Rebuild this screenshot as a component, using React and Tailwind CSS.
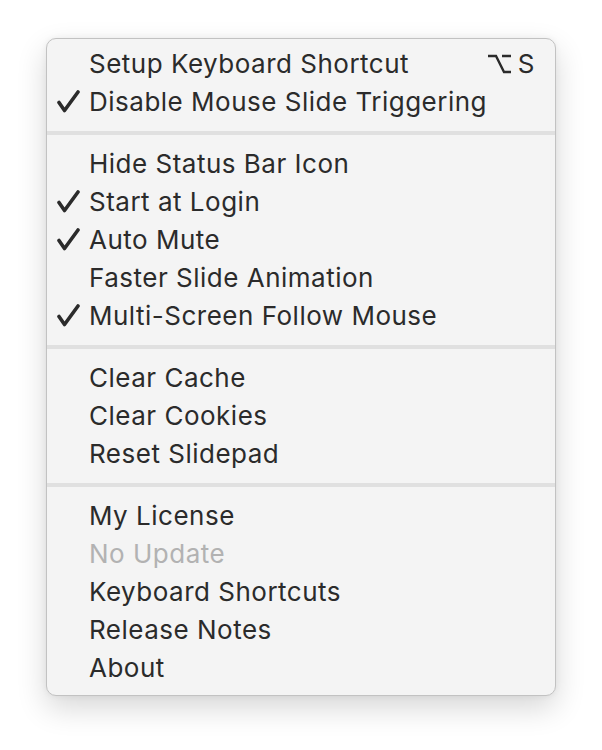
import React from "react";

const Check = () => (
  <svg width="24" height="24" viewBox="0 0 24 24" className="block">
    <path d="M3 12.5 L8.5 20.5 L22 2" fill="none" stroke="#2b2b2b" strokeWidth="3.6" strokeLinecap="round" strokeLinejoin="round" />
  </svg>
);

const OptionKey = () => (
  <svg width="25" height="20" viewBox="0 0 25 20" className="block">
    <path d="M1 2 H9 L17 18 H24" fill="none" stroke="#2b2b2b" strokeWidth="2.4" />
    <path d="M15 2 H24" fill="none" stroke="#2b2b2b" strokeWidth="2.4" />
  </svg>
);

const Row = ({ label, checked, disabled, shortcut }) => (
  <div className="flex h-[38px] items-center">
    <div className="flex w-[42px] shrink-0 items-center pl-[9px]">{checked ? <Check /> : null}</div>
    <div className={"flex-1 " + (disabled ? "text-[#b2b2b2]" : "text-[#2b2b2b]")}>{label}</div>
    {shortcut ? (
      <div className="flex items-center gap-[6px] pr-[20px] text-[#2b2b2b]">
        <OptionKey />
        <span>S</span>
      </div>
    ) : null}
  </div>
);

const Sep = () => (
  <div className="flex h-[24px] items-center">
    <div className="h-[4px] w-full bg-[#e0e0e0]" />
  </div>
);

export default function App() {
  return (
    <div className="min-h-[750px] w-[602px] bg-white pl-[46px] pt-[38px]" style={{ fontFamily: "Inter, 'Noto Sans', sans-serif" }}>
      <div className="w-[510px] overflow-hidden rounded-[10px] border border-[#c2c2c2] bg-[#f4f4f4] pb-[8px] pt-[6px] text-[26px] leading-none tracking-[0.5px] shadow-[0_12px_30px_rgba(0,0,0,0.16),0_0_6px_rgba(0,0,0,0.06)]">
        <Row label="Setup Keyboard Shortcut" shortcut />
        <Row label="Disable Mouse Slide Triggering" checked />
        <Sep />
        <Row label="Hide Status Bar Icon" />
        <Row label="Start at Login" checked />
        <Row label="Auto Mute" checked />
        <Row label="Faster Slide Animation" />
        <Row label="Multi-Screen Follow Mouse" checked />
        <Sep />
        <Row label="Clear Cache" />
        <Row label="Clear Cookies" />
        <Row label="Reset Slidepad" />
        <Sep />
        <Row label="My License" />
        <Row label="No Update" disabled />
        <Row label="Keyboard Shortcuts" />
        <Row label="Release Notes" />
        <Row label="About" />
      </div>
    </div>
  );
}
